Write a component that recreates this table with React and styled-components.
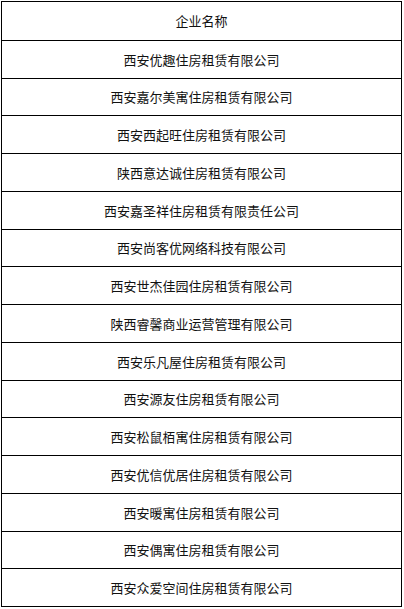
import styled, { createGlobalStyle } from 'styled-components';

const GlobalStyle = createGlobalStyle`
  html, body {
    margin: 0;
    padding: 0;
    background: #fff;
  }
  body {
    font-family: "Noto Sans CJK SC", "Noto Sans", sans-serif;
  }
`;

const companies = [
  '西安优趣住房租赁有限公司',
  '西安嘉尔美寓住房租赁有限公司',
  '西安西起旺住房租赁有限公司',
  '陕西意达诚住房租赁有限公司',
  '西安嘉圣祥住房租赁有限责任公司',
  '西安尚客优网络科技有限公司',
  '西安世杰佳园住房租赁有限公司',
  '陕西睿馨商业运营管理有限公司',
  '西安乐凡屋住房租赁有限公司',
  '西安源友住房租赁有限公司',
  '西安松鼠栢寓住房租赁有限公司',
  '西安优信优居住房租赁有限公司',
  '西安暖寓住房租赁有限公司',
  '西安偶寓住房租赁有限公司',
  '西安众爱空间住房租赁有限公司',
];

const Table = styled.div`
  box-sizing: border-box;
  margin: 1px 0 0 1px;
  width: 401px;
  height: 606px;
  border: 1px solid #000;
  display: grid;
  grid-template-rows: repeat(16, 1fr);
`;

const Cell = styled.div`
  display: flex;
  align-items: center;
  justify-content: center;
  border-top: ${(p) => (p.$first ? 'none' : '1px solid #000')};
  font-size: 13px;
  color: #111;
  line-height: 1;
  white-space: nowrap;
`;

export default function App() {
  return (
    <>
      <GlobalStyle />
      <Table>
        <Cell $first>企业名称</Cell>
        {companies.map((name) => (
          <Cell key={name}>{name}</Cell>
        ))}
      </Table>
    </>
  );
}
